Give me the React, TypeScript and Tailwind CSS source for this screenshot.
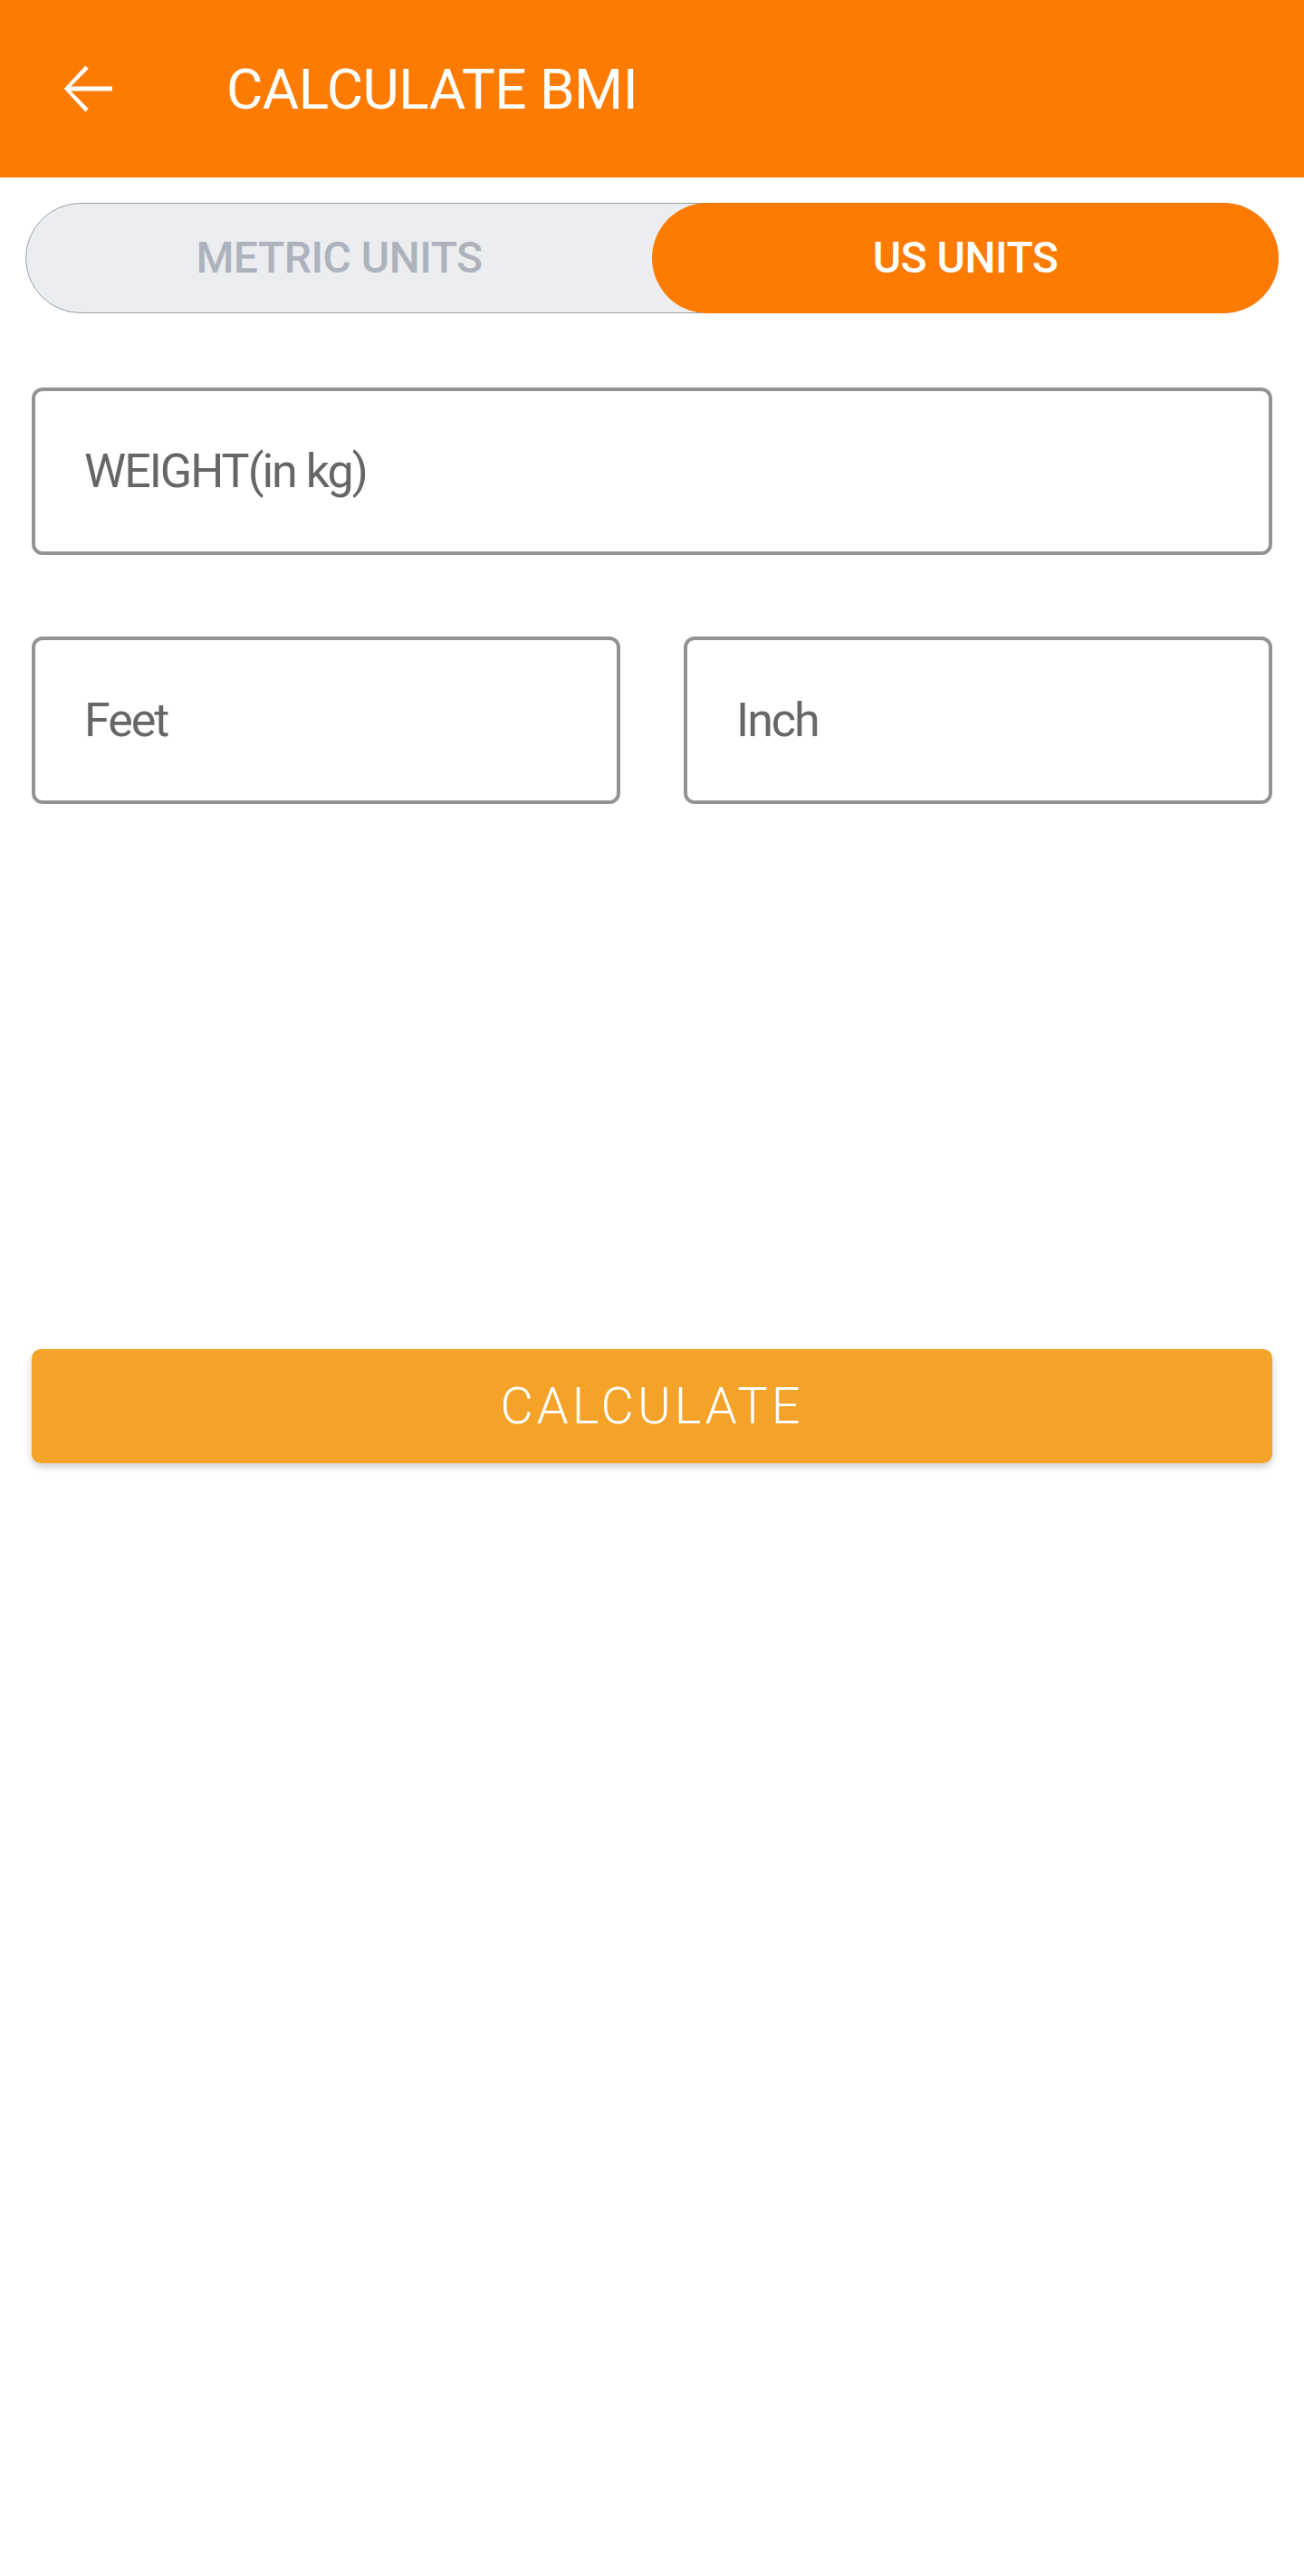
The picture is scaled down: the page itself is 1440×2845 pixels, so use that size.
import { useState } from "react";

function BackArrow() {
  return (
    <svg viewBox="0 0 24 24" className="w-[84px] h-[84px] fill-white shrink-0">
      <path d="M20 11.3H6.9l5.6-5.6-1-1L4.8 12l6.7 7.3 1-1-5.6-5.6H20v-1.4z" />
    </svg>
  );
}

function Field({ label }: { label: string }) {
  return (
    <div className="flex-1 h-[185px] border-[4px] border-[#939393] rounded-[12px] bg-white flex items-center pl-[54px]">
      <span className="text-[52px] tracking-[-2px] text-[#666666]">{label}</span>
    </div>
  );
}

export default function App() {
  const [unit, setUnit] = useState<"metric" | "us">("us");

  return (
    <div className="min-h-screen bg-white font-['Roboto',sans-serif]">
      {/* Header */}
      <div className="h-[196px] bg-[#fe7b02] flex items-center pl-[54px]">
        <BackArrow />
        <h1 className="ml-[112px] text-[62px] tracking-[-0.5px] text-white font-normal">CALCULATE BMI</h1>
      </div>

      <div className="px-[35px]">
        {/* Unit toggle */}
        <div className="mt-[28px] -mx-[7px] h-[122px] rounded-full border border-[#9aa1ab] bg-[#ebedf0] flex">
          <button
            onClick={() => setUnit("metric")}
            className={
              unit === "metric"
                ? "flex-1 -my-px -ml-px rounded-full bg-[#fe7b02] text-white text-[48px] font-medium tracking-[-0.5px]"
                : "flex-1 text-[#adb3bd] text-[48px] font-medium tracking-[-0.5px]"
            }
          >
            METRIC UNITS
          </button>
          <button
            onClick={() => setUnit("us")}
            className={
              unit === "us"
                ? "w-[692px] -my-px -mr-px rounded-full bg-[#fe7b02] text-white text-[48px] font-medium tracking-[-0.5px]"
                : "w-[692px] text-[#adb3bd] text-[48px] font-medium tracking-[-0.5px]"
            }
          >
            US UNITS
          </button>
        </div>

        {/* Inputs */}
        <div className="mt-[82px] flex">
          <Field label="WEIGHT(in kg)" />
        </div>
        <div className="mt-[90px] flex gap-[70px]">
          <Field label="Feet" />
          <Field label="Inch" />
        </div>

        {/* Calculate */}
        <button className="mt-[602px] w-full h-[126px] rounded-[10px] bg-[#f4a328] shadow-[0_4px_8px_rgba(0,0,0,0.2)] text-white text-[56px] font-light tracking-[4px]">
          CALCULATE
        </button>
      </div>
    </div>
  );
}
